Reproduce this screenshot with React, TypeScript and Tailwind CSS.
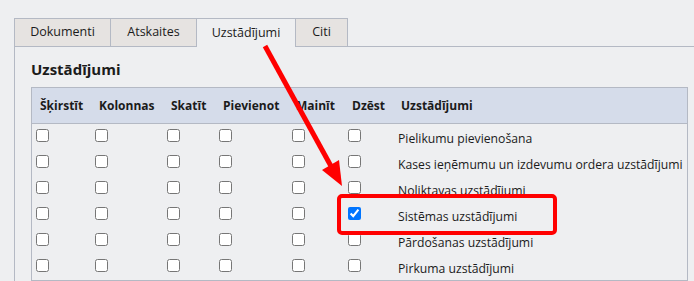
const tabs = [
  { label: "Dokumenti", width: "w-[97px]" },
  { label: "Atskaites", width: "w-[87px]" },
  { label: "Uzstādījumi", width: "w-[100px]", active: true },
  { label: "Citi", width: "w-[53px]" },
];

const columns = ["Šķirstīt", "Kolonnas", "Skatīt", "Pievienot", "Mainīt", "Dzēst"];

const rows = [
  { name: "Pielikumu pievienošana" },
  { name: "Kases ieņēmumu un izdevumu ordera uzstādījumi" },
  { name: "Noliktavas uzstādījumi" },
  { name: "Sistēmas uzstādījumi", delete: true },
  { name: "Pārdošanas uzstādījumi" },
  { name: "Pirkuma uzstādījumi" },
];

const grid = "grid grid-cols-[59px_72px_52px_73px_56px_50px_1fr] px-[4px]";

export default function App() {
  return (
    <div
      className="relative w-[694px] h-[281px] overflow-hidden bg-[#eeeff1] text-[#1b1b1b]"
      style={{ fontFamily: "'Open Sans', 'Noto Sans', sans-serif" }}
    >
      <div className="pt-[18px] pl-[14px]">
        {/* tabs */}
        <div className="flex border-b border-[#b4b9c4]">
          {tabs.map((tab, i) => (
            <div
              key={tab.label}
              className={
                "flex items-center justify-center border border-b-0 border-[#b4b9c4] text-[12.5px] " +
                tab.width +
                (i > 0 ? " -ml-px" : "") +
                (tab.active ? " h-[29px] -mb-px bg-[#eeeff1] relative" : " h-[28px] bg-[#e6e3e1]")
              }
            >
              {tab.label}
            </div>
          ))}
        </div>

        {/* panel */}
        <div className="border-l border-[#b4b9c4] pl-[16px] pt-[12px] h-[240px]">
          <h2 className="text-[15px] font-bold leading-[20px] mb-[8px]">Uzstādījumi</h2>
          <div className="w-[657px] border border-[#b4b9c4]">
            <div className={grid + " h-[36px] items-center bg-[#d5dcea] border-b border-[#b4b9c4] text-[12px] font-bold"}>
              {columns.map((c) => (
                <div key={c} className="pl-[4px]">{c}</div>
              ))}
              <div className="pl-[3px]">Uzstādījumi</div>
            </div>
            {rows.map((row) => (
              <div key={row.name} className={grid + " h-[26px] items-start text-[12.2px]"}>
                {columns.map((c) => (
                  <div key={c} className="pt-[5px] flex">
                    <input type="checkbox" defaultChecked={c === "Dzēst" && row.delete} className="w-[13px] h-[13px]" />
                  </div>
                ))}
                <div className="pt-[6px] leading-[18px] whitespace-nowrap">{row.name}</div>
              </div>
            ))}
          </div>
        </div>
      </div>

      {/* annotation overlay */}
      <svg className="absolute inset-0 pointer-events-none" width="694" height="281" viewBox="0 0 694 281">
        <line x1="265" y1="46" x2="332" y2="168" stroke="#ff0000" strokeWidth="5" />
        <polygon points="342,186 339,160 322,170" fill="#ff0000" />
        <rect x="339" y="196" width="216" height="37" rx="3" fill="none" stroke="#ff0000" strokeWidth="4" />
      </svg>
    </div>
  );
}
